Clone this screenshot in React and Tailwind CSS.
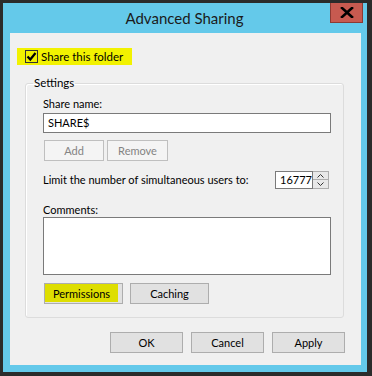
import React from 'react';

const btn = "h-[21px] border border-[#adadad] bg-[#e1e1e1] text-[11px] text-[#000] leading-none flex items-center justify-center";

export default function App() {
    return (
        <div className="w-[372px] h-[376px] bg-[#2b2b2b] pt-[3px] pl-[3px] pr-[5px] pb-[4px] font-['Lato',sans-serif] text-[11px] text-black">
            <div className="w-full h-full bg-[#64c9ea] flex flex-col px-[7px] pr-[6px] pb-[7px]">
                {/* Title bar */}
                <div className="relative h-[30px] shrink-0 flex items-center justify-center">
                    <span className="text-[15px] text-[#1b1b1b] mt-[1px] -ml-[2px]">Advanced Sharing</span>
                    <div className="absolute top-0 right-[-2px] w-[33px] h-[20px] bg-[#c75a50] border border-[#8c3a33] border-t-0 flex items-center justify-center">
                        <svg width="14" height="11" viewBox="0 0 14 11">
                            <path d="M2 1 L12 10 M12 1 L2 10" stroke="#000" strokeWidth="2.6" strokeLinecap="square" />
                        </svg>
                    </div>
                </div>

                {/* Content */}
                <div className="flex-1 bg-[#f0f0f0] flex flex-col">
                    <div className="mt-[15px] ml-[7px] w-[115px] h-[17px] bg-[#f2f200] flex items-center">
                        <div className="ml-[8px] w-[13px] h-[13px] border border-[#333] bg-[#f2f200] flex items-center justify-center">
                            <svg width="11" height="11" viewBox="0 0 11 11">
                                <path d="M1.5 5.5 L4.3 8.5 L9.5 2" stroke="#000" strokeWidth="2.2" fill="none" />
                            </svg>
                        </div>
                        <span className="ml-[3px] text-[11.5px]">Share this folder</span>
                    </div>

                    {/* Settings group */}
                    <fieldset className="ml-[15px] mt-[10px] w-[319px] border border-[#dcdcdc] rounded-[3px] pb-[13px] shadow-[inset_1px_1px_0_#fff]">
                        <legend className="ml-[7px] px-[1px] text-[11.5px] leading-[16px]">Settings</legend>
                        <div className="pl-[17px] pt-[5px] flex flex-col">
                            <span className="leading-[15px]">Share name:</span>
                            <div className="mt-[2px] w-[288px] h-[20px] border border-[#7a7a7a] bg-white flex items-center pl-[4px]">SHARE$</div>
                            <div className="mt-[7px] ml-[1px] flex gap-[3px]">
                                <div className={btn + " w-[60px] bg-[#f4f4f4] border-[#bfbfbf] text-[#838383]"}>Add</div>
                                <div className={btn + " w-[61px] bg-[#f4f4f4] border-[#bfbfbf] text-[#838383]"}>Remove</div>
                            </div>
                            <div className="mt-[10px] flex items-center h-[18px]">
                                <span className="w-[232px]">Limit the number of simultaneous users to:</span>
                                <div className="w-[38px] h-[18px] border border-[#7a7a7a] bg-white overflow-hidden whitespace-nowrap pl-[4px] flex items-center">16777216</div>
                                <div className="w-[16px] h-[18px] border border-[#adadad] border-l-0 bg-[#e8e8e8] flex flex-col">
                                    <div className="h-[8px] flex items-center justify-center border-b border-[#adadad]">
                                        <svg width="7" height="4" viewBox="0 0 7 4"><path d="M0.5 3.5 L3.5 0.5 L6.5 3.5" stroke="#333" fill="none" /></svg>
                                    </div>
                                    <div className="flex-1 flex items-center justify-center">
                                        <svg width="7" height="4" viewBox="0 0 7 4"><path d="M0.5 0.5 L3.5 3.5 L6.5 0.5" stroke="#333" fill="none" /></svg>
                                    </div>
                                </div>
                            </div>
                            <span className="mt-[13px] leading-[15px]">Comments:</span>
                            <div className="w-[288px] h-[58px] border border-[#7a7a7a] bg-white" />
                            <div className="mt-[8px] ml-[1px] flex gap-[7px]">
                                <div className={btn + " relative w-[79px] h-[20px] border-[#7a7a7a]"}>
                                    <span className="absolute left-0 top-0 w-[73px] h-[18px] bg-[#dede00]" />
                                    <span className="relative -ml-[4px]">Permissions</span>
                                </div>
                                <div className={btn + " w-[79px] h-[20px] border-[#7a7a7a]"}>Caching</div>
                            </div>
                        </div>
                    </fieldset>

                    {/* Dialog buttons */}
                    <div className="mt-[14px] pr-[16px] flex justify-end gap-[8px]">
                        <div className={btn + " w-[73px] border-[#3c7fb1]"}>OK</div>
                        <div className={btn + " w-[73px] border-[#7a7a7a]"}>Cancel</div>
                        <div className={btn + " w-[73px] border-[#7a7a7a]"}>Apply</div>
                    </div>
                </div>
            </div>
        </div>
    );
}
